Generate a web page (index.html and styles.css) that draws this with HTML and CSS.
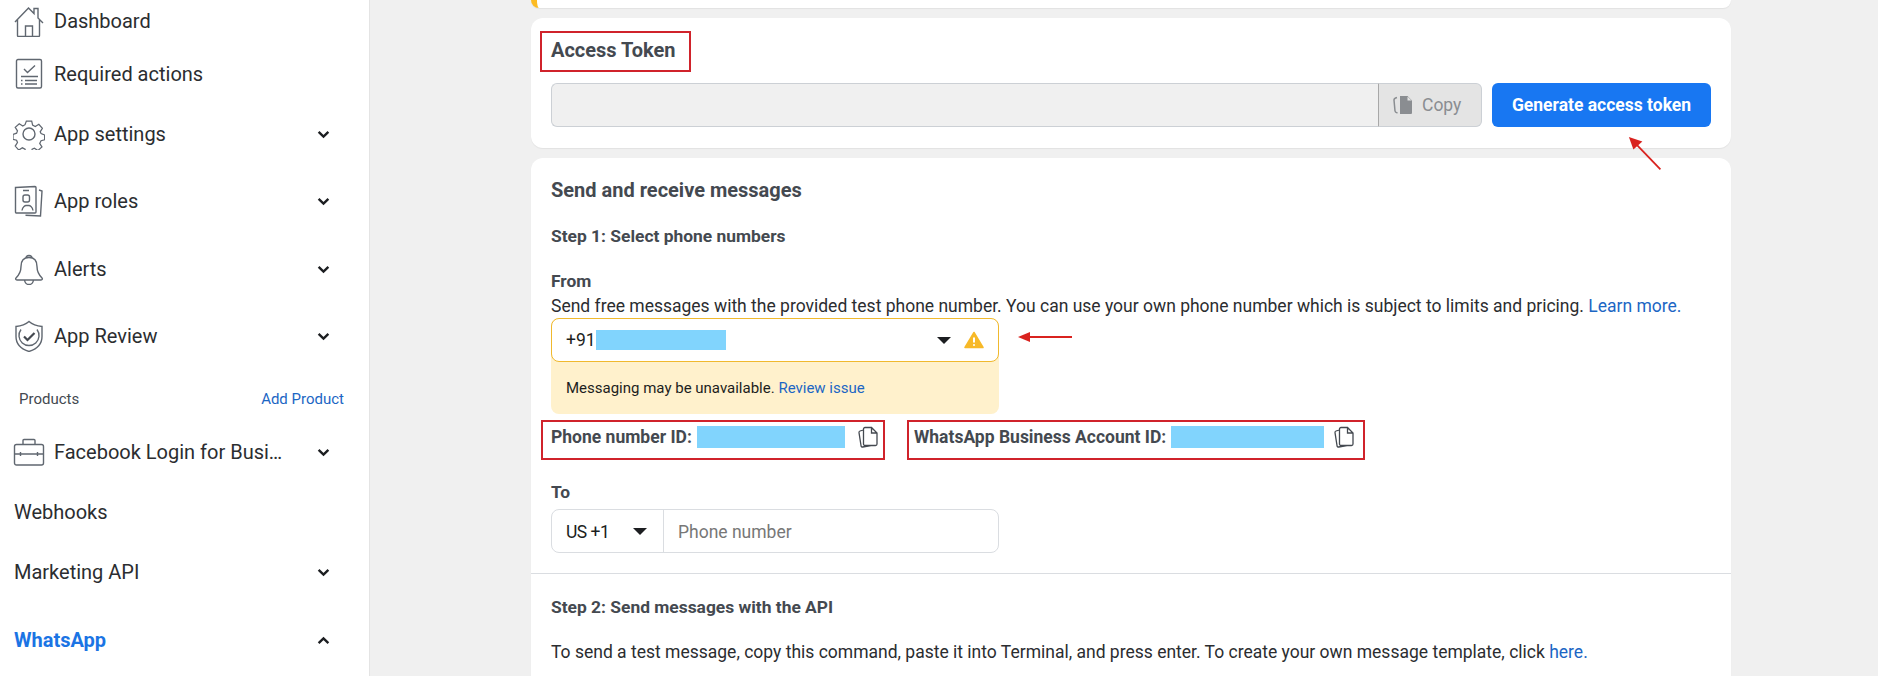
FILE: index.html
```html
<!DOCTYPE html>
<html lang="en">
<head>
<meta charset="utf-8">
<title>WhatsApp API Setup</title>
<link rel="stylesheet" href="styles.css">
</head>
<body>
<div class="page">
  <aside class="sidebar">
    <a class="nav-row first-row">
      <svg class="nav-icon" viewBox="0 0 32 32"><path d="M2 17 15.500 3 21 8.500V3.500h4v9.500l5 5M4.500 15v15.500a1 1 0 0 0 1 1h20a1 1 0 0 0 1-1V15M12.500 31.500V21h7v10.500"/></svg>
      <span class="nav-label">Dashboard</span>
    </a>
    <a class="nav-row gap-13">
      <svg class="nav-icon" viewBox="0 0 32 32"><rect x="3.500" y="1.500" width="25" height="28.500" rx="1.500"/><path d="m11 11 3.500 3.500L22 7.500M8 18.500h17M8 22.500h1.500M12 22.500h12M8 26h1.500M12 26h12"/></svg>
      <span class="nav-label">Required actions</span>
    </a>
    <a class="nav-row gap-20">
      <svg class="nav-icon" viewBox="0 0 32 32"><circle cx="16" cy="16" r="6"/><path d="M13 1.500h6l1 4.500 3 1.500 4-2.500 4 4.500-2.500 4 1 2 4 1.500v5.500l-4 1-1.500 3 2.500 4-4.500 4-4-2.500-2.500 1-1 4.500h-6l-1-4.500-3-1.500-4 2.500-4-4.500 2.500-4-1-2.500-4-1v-5.500l4-1.500 1-2.500-2.500-4 4.500-4 4 2.500 2.500-1.500z" transform="translate(1.800 1.800) scale(.89)"/></svg>
      <span class="nav-label">App settings</span>
      <svg class="chevron" viewBox="0 0 12 8"><path d="m1.500 1.500 4.500 4.500 4.500-4.500"/></svg>
    </a>
    <a class="nav-row gap-27">
      <svg class="nav-icon" viewBox="0 0 32 32"><path d="M2.500 2.500 22 1.500a1 1 0 0 1 1 1v24.500a1 1 0 0 1-1 1l-18.500 0a1 1 0 0 1-1-1zM26 5l3 1-1.500 25-15-.8M10 5.500h6M9 25.500c.5-4 3.500-5 4-5h3c.5 0 3.500 1 4 5"/><rect x="10" y="10" width="6.500" height="7" rx="2"/></svg>
      <span class="nav-label">App roles</span>
      <svg class="chevron" viewBox="0 0 12 8"><path d="m1.500 1.500 4.500 4.500 4.500-4.500"/></svg>
    </a>
    <a class="nav-row gap-28">
      <svg class="nav-icon" viewBox="0 0 32 32"><path d="M13 5.500a3 3 0 1 1 6 0M16 4.500c-6 0-8 4.500-8 9 0 5-1.500 8-5 11.500-.7.800-.4 2 1 2h24c1.400 0 1.700-1.200 1-2-3.500-3.500-5-6.500-5-11.500 0-4.500-2-9-8-9zM11.500 27c.5 3.200 2.500 4.500 4.500 4.500s4-1.300 4.500-4.500"/></svg>
      <span class="nav-label">Alerts</span>
      <svg class="chevron" viewBox="0 0 12 8"><path d="m1.500 1.500 4.500 4.500 4.500-4.500"/></svg>
    </a>
    <a class="nav-row gap-27">
      <svg class="nav-icon" viewBox="0 0 32 32"><path d="M16 1.500c3.500 3 8 4.500 13 5v10c0 8-5 12.500-13 15-8-2.500-13-7-13-15v-10c5-.5 9.500-2 13-5z"/><path class="thick" d="m11 16.500 3.500 3.500 7-7"/><path d="M8 9.500a10 10 0 1 0 16 0"/></svg>
      <span class="nav-label">App Review</span>
      <svg class="chevron" viewBox="0 0 12 8"><path d="m1.500 1.500 4.500 4.500 4.500-4.500"/></svg>
    </a>
    <div class="products-row">
      <span class="products-label">Products</span>
      <a class="add-product">Add Product</a>
    </div>
    <a class="nav-row gap-23">
      <svg class="nav-icon" viewBox="0 0 32 32"><path d="M10 8.500V4.500a1 1 0 0 1 1-1h10a1 1 0 0 1 1 1v4"/><rect x="1.500" y="8.500" width="29" height="20.500" rx="2"/><path d="M1.500 18h29M7.500 16v4M24.500 16v4"/></svg>
      <span class="nav-label">Facebook Login for Busi…</span>
      <svg class="chevron" viewBox="0 0 12 8"><path d="m1.500 1.500 4.500 4.500 4.500-4.500"/></svg>
    </a>
    <a class="nav-row gap-20 plain"><span class="nav-label">Webhooks</span></a>
    <a class="nav-row gap-20 plain">
      <span class="nav-label">Marketing API</span>
      <svg class="chevron" viewBox="0 0 12 8"><path d="m1.500 1.500 4.500 4.500 4.500-4.500"/></svg>
    </a>
    <a class="nav-row gap-28 plain">
      <span class="nav-label active">WhatsApp</span>
      <svg class="chevron" viewBox="0 0 12 8"><path d="m1.500 6.500 4.500-4.500 4.500 4.500"/></svg>
    </a>
  </aside>

  <main class="main">
    <div class="stub-card"></div>

    <section class="card token-card">
      <div class="callout title-callout"><h2 class="card-title">Access Token</h2></div>
      <div class="token-row">
        <div class="token-field"></div>
        <div class="copy-btn">
          <svg class="copy-fill" viewBox="0 0 22 20"><path d="M8 1H15l5 5v12a1 1 0 0 1-1 1H8zM15.500 1v4.500H20"/><path class="back" d="M5 2.500C2.500 3 2 4 2 5l1 11c0 1 1 1.500 2.500 2"/></svg>
          <span>Copy</span>
        </div>
        <button class="generate-btn">Generate access token</button>
      </div>
    </section>

    <section class="card send-card">
      <div class="send-top">
        <h2 class="card-title">Send and receive messages</h2>
        <h3 class="step-title first-step">Step 1: Select phone numbers</h3>
        <div class="field-label from-label">From</div>
        <p class="body-text from-help">Send free messages with the provided test phone number. You can use your own phone number which is subject to limits and pricing. <a class="link">Learn more.</a></p>
        <div class="from-block">
          <div class="from-select">
            <span>+91</span>
            <span class="redact redact-from"></span>
            <span class="caret caret-from"></span>
            <svg class="warn-icon" viewBox="0 0 20 18"><path class="warn-tri" d="M10 1.500 19 16.500H1z"/><path class="warn-mark" d="M10 6.500v5M10 13.300v1.500"/></svg>
          </div>
          <div class="from-warning">Messaging may be unavailable. <a class="link">Review issue</a></div>
        </div>
        <div class="id-row">
          <div class="callout id-callout phone-id">
            <span class="id-label">Phone number ID:</span>
            <span class="redact redact-phone"></span>
            <svg class="copy-line" viewBox="0 0 22 22"><path d="M8 1.500h6.500l5.500 5.500v11a1.500 1.500 0 0 1-1.500 1.500H8A1.500 1.500 0 0 1 6.500 18V3A1.500 1.500 0 0 1 8 1.500zM14.500 1.500V7H20M6.500 4 3 5a1.500 1.500 0 0 0-1 1.700l2 12.800A1.500 1.500 0 0 0 5.700 21L14 19.500"/></svg>
          </div>
          <div class="callout id-callout waba-id">
            <span class="id-label">WhatsApp Business Account ID:</span>
            <span class="redact redact-waba"></span>
            <svg class="copy-line" viewBox="0 0 22 22"><path d="M8 1.500h6.500l5.500 5.500v11a1.500 1.500 0 0 1-1.500 1.500H8A1.500 1.500 0 0 1 6.500 18V3A1.500 1.500 0 0 1 8 1.500zM14.500 1.500V7H20M6.500 4 3 5a1.500 1.500 0 0 0-1 1.700l2 12.800A1.500 1.500 0 0 0 5.700 21L14 19.500"/></svg>
          </div>
        </div>
        <div class="field-label to-label">To</div>
        <div class="to-field">
          <div class="country"><span class="country-code">US +1</span><span class="caret"></span></div>
          <div class="placeholder">Phone number</div>
        </div>
      </div>
      <div class="send-bottom">
        <h3 class="step-title">Step 2: Send messages with the API</h3>
        <p class="body-text step2-text">To send a test message, copy this command, paste it into Terminal, and press enter. To create your own message template, click <a class="link">here.</a></p>
      </div>
    </section>
  </main>

  <svg class="arrow arrow-generate" viewBox="0 0 40 40"><path d="M36 37 9 9"/><path class="head" d="M1 1 16 6 6 15z"/></svg>
  <svg class="arrow arrow-from" viewBox="0 0 56 12"><path d="M54 6H10"/><path class="head" d="M0 6 12 1V11z"/></svg>
</div>
</body>
</html>
```

FILE: styles.css
```css
* { box-sizing: border-box; }
html, body { margin: 0; height: 676px; overflow: hidden; }
body { font-family: Roboto, "Liberation Sans", sans-serif; color: #1c1e21; background: #f0f0f0; }
h2, h3, p { margin: 0; }

.page { position: relative; display: flex; width: 1878px; height: 676px; overflow: hidden; }

/* Sidebar */
.sidebar { flex: 0 0 370px; height: 676px; background: #fff; border-right: 1px solid #e4e4e4; padding-left: 14px; overflow: hidden; }
.nav-row { display: flex; align-items: center; height: 40px; font-size: 20px; color: #2b2d30; }
.first-row { margin-top: 1px; }
.nav-label { white-space: nowrap; }
.nav-label.active { color: #1b74e4; font-weight: 700; }
.nav-icon { flex: 0 0 32px; width: 32px; height: 32px; margin-right: 9px; fill: none; stroke: #606770; stroke-width: 1.400; margin-left: -1px; }
.nav-icon .thick { stroke: #444950; stroke-width: 2.200; }
.chevron { width: 13px; height: 9px; position: absolute; left: 317px; fill: none; stroke: #1c1e21; stroke-width: 2.200; }
.gap-13 { margin-top: 13px; }
.gap-20 { margin-top: 20px; }
.gap-23 { margin-top: 23px; }
.gap-27 { margin-top: 27px; }
.gap-28 { margin-top: 28px; }
.products-row { display: flex; justify-content: space-between; align-items: center; height: 20px; margin-top: 33px; padding: 0 25px 0 5px; font-size: 15px; }
.products-label { color: #444950; }
.add-product { color: #1c66c4; }

/* Main column */
.main { flex: 1; padding-left: 161px; }
.stub-card { width: 1200px; height: 8px; background: #fff; border-radius: 0 0 10px 10px; border-left: 6px solid #fcbb22; box-shadow: 0 1px 1px rgba(0,0,0,.06); }
.card { width: 1200px; margin-top: 10px; background: #fff; border-radius: 12px; box-shadow: 0 1px 1px rgba(0,0,0,.06); }
.card-title { font-size: 20px; line-height: 24px; font-weight: 700; color: #444950; }
.step-title { font-size: 17.400px; line-height: 20px; font-weight: 700; color: #444950; }
.field-label { font-size: 17.400px; line-height: 20px; font-weight: 700; color: #444950; }
.body-text { font-size: 17.500px; line-height: 20px; color: #2b2d30; white-space: nowrap; }
.link { color: #1c66c4; }
.callout { border: 2px solid #d0232b; }

/* Access token */
.token-card { height: 130px; padding: 13px 20px 0; }
.title-callout { width: 151px; height: 41px; margin-left: -11px; padding-left: 9px; padding-bottom: 3px; display: flex; align-items: center; }
.token-row { display: flex; height: 44px; margin-top: 11px; }
.token-field { width: 827px; background: #f0f0f0; border: 1px solid #ccd0d5; border-right: 0; border-radius: 6px 0 0 6px; }
.copy-btn { display: flex; align-items: center; gap: 8px; width: 104px; padding-left: 13px; background: #e4e4e4; border: 1px solid #ccd0d5; border-left: 1px solid #a8a8a8; border-radius: 0 6px 6px 0; font-size: 17.500px; color: #8a8d91; }
.copy-fill { width: 22px; height: 20px; fill: #8a8d91; stroke: none; }
.copy-fill .back { fill: none; stroke: #8a8d91; stroke-width: 1.500; }
.generate-btn { width: 219px; margin-left: 10px; border: 0; border-radius: 6px; background: #1877f2; color: #fff; font: 700 17.500px Roboto, sans-serif; padding: 0; }

/* Send & receive */
.send-card { height: 700px; }
.send-top { padding: 20px 20px 20px; border-bottom: 1px solid #dadde1; height: 416px; }
.first-step { margin-top: 24px; }
.from-label { margin-top: 25px; }
.from-help { margin-top: 5px; }
.from-block { width: 448px; margin-top: 2px; background: #fff1cc; border-radius: 8px; }
.from-select { position: relative; display: flex; align-items: center; height: 44px; padding-left: 14px; background: #fff; border: 1px solid #f0b92e; border-radius: 8px; font-size: 17.500px; }
.redact { display: inline-block; background: #81d4fd; }
.redact-from { width: 130px; height: 20px; margin-left: 0; }
.caret { display: inline-block; width: 0; height: 0; border-left: 7px solid transparent; border-right: 7px solid transparent; border-top: 7px solid #1c1e21; }
.caret-from { margin-left: 211px; }
.warn-icon { width: 20px; height: 18px; margin-left: 13px; }
.warn-tri { fill: #f7b928; stroke: #f7b928; stroke-width: 1.500; stroke-linejoin: round; }
.warn-mark { fill: none; stroke: #fff; stroke-width: 2; }
.from-warning { height: 52px; padding-left: 15px; font-size: 15px; line-height: 52px; color: #1c1e21; }
.id-row { display: flex; margin-top: 6px; margin-left: -10px; }
.id-callout { position: relative; display: flex; align-items: center; height: 40px; padding-left: 8px; padding-bottom: 7px; }
.id-label { font-size: 17.500px; font-weight: 700; color: #444950; white-space: nowrap; }
.phone-id { width: 344px; }
.waba-id { width: 458px; margin-left: 22px; padding-left: 5px; }
.redact-phone { width: 148px; height: 22px; margin-left: 5px; }
.redact-waba { width: 153px; height: 22px; margin-left: 5px; }
.copy-line { width: 22px; height: 22px; margin-left: 12px; fill: none; stroke: #444950; stroke-width: 1.300; }
.waba-id .copy-line { margin-left: 9px; }
.to-label { margin-top: 22px; }
.to-field { display: flex; width: 448px; height: 44px; margin-top: 7px; border: 1px solid #dadde1; border-radius: 8px; font-size: 17.500px; }
.country { display: flex; align-items: center; gap: 21px; width: 112px; padding-left: 14px; padding-top: 1px; border-right: 1px solid #dadde1; }
.country-code { width: 46px; white-space: nowrap; letter-spacing: -.5px; }
.placeholder { display: flex; align-items: center; padding-left: 14px; padding-top: 1px; color: #777; }
.send-bottom { padding: 23px 20px 0; }
.step2-text { margin-top: 25px; }

/* Annotation arrows drawn over the page */
.arrow { position: absolute; fill: none; stroke: #d9231f; stroke-width: 2; }
.arrow .head { fill: #d9231f; stroke: none; }
.arrow-generate { left: 1628px; top: 135px; width: 36px; height: 38px; }
.arrow-from { left: 1018px; top: 331px; width: 56px; height: 12px; }
```
